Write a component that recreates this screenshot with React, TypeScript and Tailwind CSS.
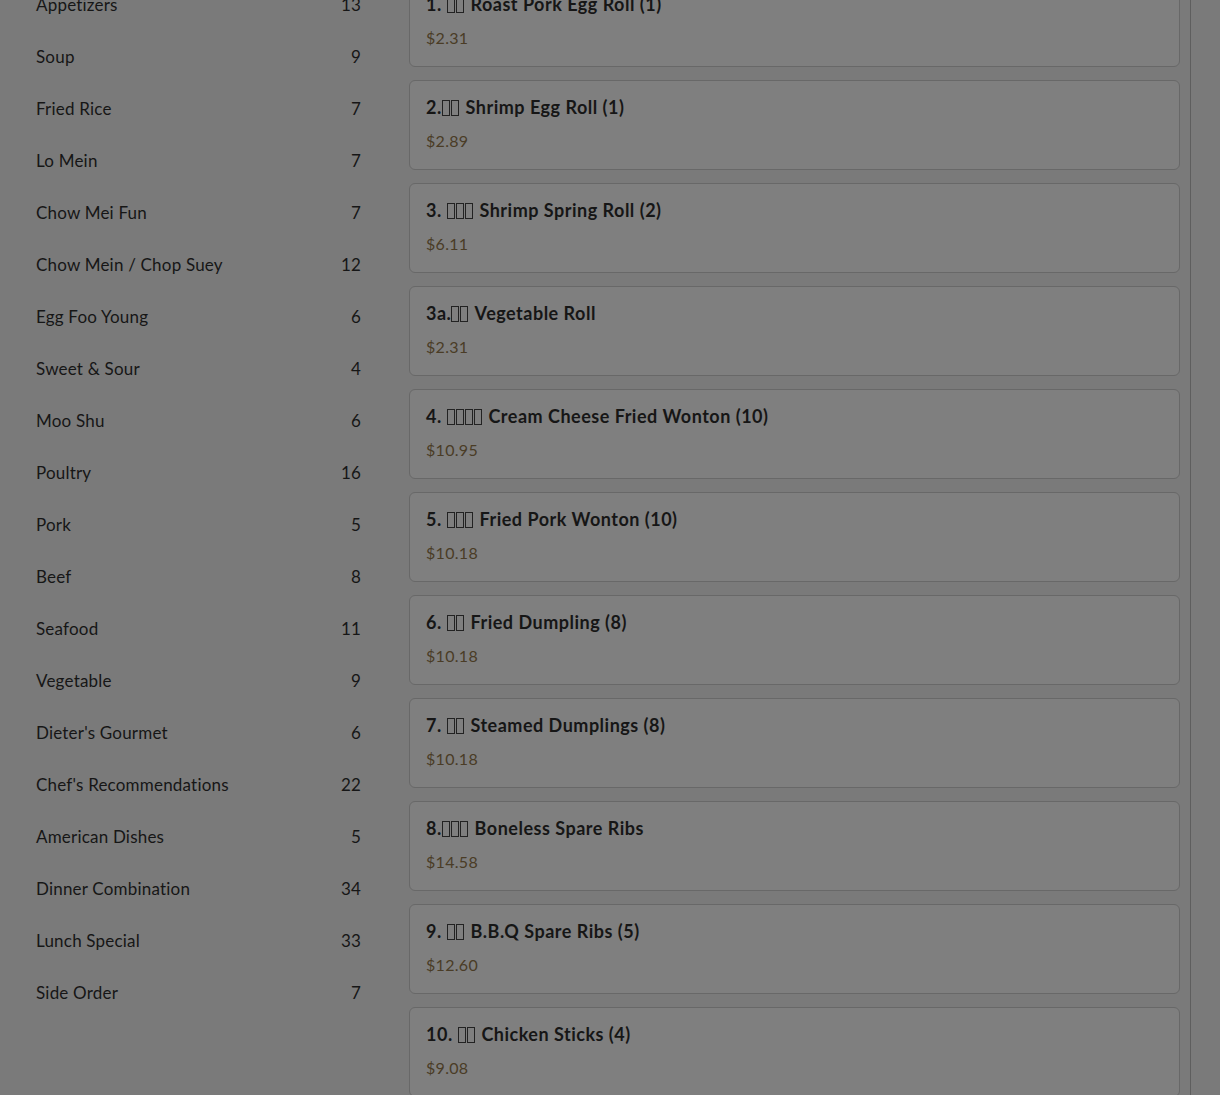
const categories: [string, number][] = [
  ["Appetizers", 13],
  ["Soup", 9],
  ["Fried Rice", 7],
  ["Lo Mein", 7],
  ["Chow Mei Fun", 7],
  ["Chow Mein / Chop Suey", 12],
  ["Egg Foo Young", 6],
  ["Sweet & Sour", 4],
  ["Moo Shu", 6],
  ["Poultry", 16],
  ["Pork", 5],
  ["Beef", 8],
  ["Seafood", 11],
  ["Vegetable", 9],
  ["Dieter's Gourmet", 6],
  ["Chef's Recommendations", 22],
  ["American Dishes", 5],
  ["Dinner Combination", 34],
  ["Lunch Special", 33],
  ["Side Order", 7],
];

// [prefix, missing-glyph count, name, price]
const items: [string, number, string, string][] = [
  ["1. ", 2, " Roast Pork Egg Roll (1)", "$2.31"],
  ["2.", 2, " Shrimp Egg Roll (1)", "$2.89"],
  ["3. ", 3, " Shrimp Spring Roll (2)", "$6.11"],
  ["3a.", 2, " Vegetable Roll", "$2.31"],
  ["4. ", 4, " Cream Cheese Fried Wonton (10)", "$10.95"],
  ["5. ", 3, " Fried Pork Wonton (10)", "$10.18"],
  ["6. ", 2, " Fried Dumpling (8)", "$10.18"],
  ["7. ", 2, " Steamed Dumplings (8)", "$10.18"],
  ["8.", 3, " Boneless Spare Ribs", "$14.58"],
  ["9. ", 2, " B.B.Q Spare Ribs (5)", "$12.60"],
  ["10. ", 2, " Chicken Sticks (4)", "$9.08"],
];

const Tofu = ({ n }: { n: number }) => (
  <span className="inline-flex gap-[1px] align-[-2px] mr-[2px]">
    {Array.from({ length: n }).map((_, i) => (
      <span key={i} className="inline-block w-[8px] h-[16px] border border-[#222]" />
    ))}
  </span>
);

const App = () => {
  return (
    <div
      className="flex h-[1095px] w-[1220px] overflow-hidden bg-[#7a7a7a] text-[#161616]"
      style={{ fontFamily: "Lato, 'Noto Sans', sans-serif" }}
    >
      <div className="w-[385px] shrink-0 pl-9 pr-6 mt-[-21px]">
        {categories.map(([name, count]) => (
          <div key={name} className="flex h-[52px] items-center justify-between text-[17px] tracking-[0.2px]">
            <span>{name}</span>
            <span>{count}</span>
          </div>
        ))}
      </div>
      <div className="flex w-[771px] shrink-0 flex-col gap-[13px] ml-6 mt-[-23px]">
        {items.map(([pre, n, name, price]) => (
          <div
            key={pre + name}
            className="h-[90px] shrink-0 rounded-md border border-[#686868] bg-[#7f7f7f] px-4 pt-[14px]"
          >
            <div className="text-[18px] font-bold leading-6 whitespace-pre tracking-[0.5px]">
              {pre}
              <Tofu n={n} />
              {name}
            </div>
            <div className="mt-[10px] text-[16px] leading-6 tracking-[0.3px] text-[#4a3c26]">{price}</div>
          </div>
        ))}
      </div>
      <div className="ml-[10px] w-[1px] bg-[#5e5e5e]" />
    </div>
  );
};

export default App;
